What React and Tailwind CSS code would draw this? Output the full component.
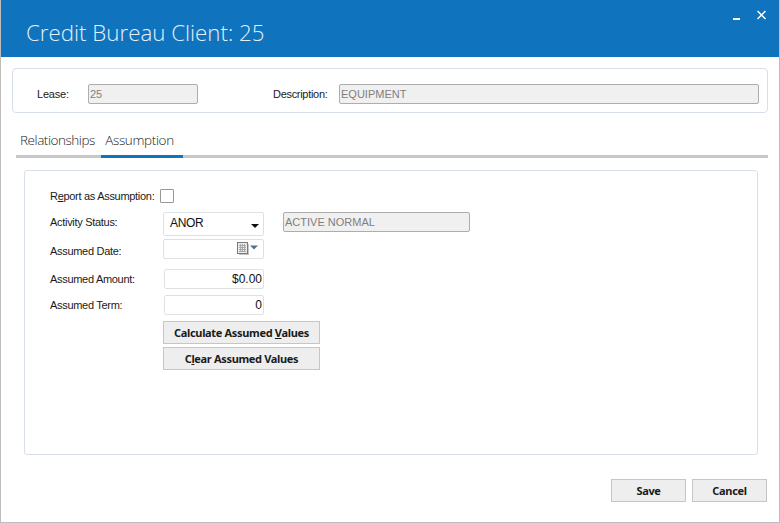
import React from 'react';

const readOnlyField = 'h-5 rounded-[2px] border border-[#adadad] bg-[#f0f0f0] px-[1px] text-[11px] leading-[18px] text-[#7f7f7f]';
const softField = 'rounded-[2px] border border-[#dde1e6] bg-white';
const button = 'flex items-center justify-center border border-[#c6c6c6] bg-[#eeeeee] pt-[1px] text-[11px] font-bold tracking-[-0.33px] text-[#1b1b1b] [font-family:"Noto_Sans",sans-serif]';

function CalendarIcon() {
  return (
    <svg width="24" height="14" viewBox="0 0 24 14" className="mr-[2px] shrink-0">
      <rect x="0.500" y="0.500" width="10" height="11" fill="#ececec" stroke="#7a7a7a" />
      <rect x="11" y="2" width="1" height="11" fill="#c4c4c4" />
      <rect x="2" y="12" width="10" height="1" fill="#c4c4c4" />
      <path d="M2 3.500h7M2 5.500h7M2 7.500h7M2 9.500h7M3.500 2v8M5.500 2v8M7.500 2v8" stroke="#a9a9a9" strokeWidth="1" fill="none" />
      <path d="M13 3.500h8l-4 4z" fill="#55708f" />
    </svg>
  );
}

function FormRow({ label, labelClass, className, children }) {
  return (
    <div className={`flex items-start ${className}`}>
      <span className={`w-[113px] shrink-0 text-[11px] tracking-[-0.3px] text-[#1a1a1a] ${labelClass}`}>{label}</span>
      {children}
    </div>
  );
}

export default function App() {
  return (
    <div className='flex h-[523px] w-[780px] flex-col overflow-hidden border-x border-b border-[#bdbdbd] bg-white [font-family:"Liberation_Sans",Arial,sans-serif]'>
      <header className="-mx-px flex h-[57px] shrink-0 items-start justify-between bg-[#0f74bd] text-white">
        <h1 className='pl-[26px] pt-[16px] text-[22.300px] leading-[33px] font-light text-[#e4f0f9] [font-family:"Open_Sans",sans-serif]'>
          Credit Bureau Client: 25
        </h1>
        <div className="mr-[14px] mt-[10px] flex items-start gap-[17px]">
          <svg width="7" height="10" viewBox="0 0 7 10" aria-label="Minimize">
            <rect x="0" y="8" width="7" height="2" fill="#ffffff" />
          </svg>
          <svg width="9" height="10" viewBox="0 0 9 10" aria-label="Close">
            <path d="M0.500 1l8 8M8.500 1l-8 8" stroke="#ffffff" strokeWidth="1.500" fill="none" />
          </svg>
        </div>
      </header>

      <div className="ml-[11px] mr-[11px] mt-[11px] flex h-[45px] shrink-0 items-center rounded-[4px] border border-[#d8dfe8] bg-white pt-[7px]">
        <span className="ml-[24px] w-[51px] text-[11px] tracking-[-0.2px] text-[#1a1a1a]">Lease:</span>
        <div className={`w-[110px] ${readOnlyField}`}>25</div>
        <span className="ml-[75px] w-[66px] text-[11px] tracking-[-0.3px] text-[#1a1a1a]">Description:</span>
        <div className={`w-[420px] ${readOnlyField}`}>EQUIPMENT</div>
      </div>

      <nav className="ml-[15px] mr-[11px] mt-[16px] flex h-[29px] shrink-0 items-start border-b-[3px] border-[#c8c8c8] text-[13.500px] leading-[23px] font-light text-[#222222] [font-family:'Open_Sans',sans-serif]">
        <span className="w-[85px] pl-[4px] tracking-[-0.45px]">Relationships</span>
        <span className="-mb-[3px] flex h-[29px] w-[82px] justify-center border-b-[3px] border-[#0f74bd] pr-[5px] tracking-[-0.35px]">Assumption</span>
      </nav>

      <section className="ml-[23px] mr-[21px] mt-[12px] h-[285px] shrink-0 rounded-[3px] border border-[#d8dfe8] bg-white pl-[25px]">
        <div className="mt-[17px] flex h-[16px] items-center">
          <span className="w-[110px] shrink-0 whitespace-nowrap text-[11px] tracking-[-0.3px] text-[#1a1a1a]">
            R<span className="underline">e</span>port as Assumption:
          </span>
          <span className="size-[14px] rounded-[1px] border border-[#979797] bg-white" />
        </div>

        <FormRow label="Activity Status:" labelClass="pt-[2px] leading-[16px]" className="mt-[8px]">
          <div className={`flex h-[24px] w-[101px] items-start justify-between pl-[6px] pr-[3px] pt-[1px] text-[12px] tracking-[-0.3px] text-[#111111] ${softField} border-[#cfd3d8]`}>
            <span>ANOR</span>
            <svg width="8" height="4" viewBox="0 0 8 4" className="mr-[1px] mt-[10px]">
              <path d="M0 0h8l-4 4z" fill="#111111" />
            </svg>
          </div>
          <div className={`ml-[19px] w-[187px] ${readOnlyField}`}>ACTIVE NORMAL</div>
        </FormRow>

        <FormRow label="Assumed Date:" labelClass="pt-[5px] leading-[15px]" className="mt-[3px]">
          <div className={`flex h-[20px] w-[101px] items-center justify-end ${softField}`}>
            <CalendarIcon />
          </div>
        </FormRow>

        <FormRow label="Assumed Amount:" labelClass="pt-[2px] leading-[16px]" className="mt-[10px]">
          <div className={`ml-[1px] h-[20px] w-[100px] pr-[1px] text-right text-[12px] leading-[18px] text-[#111111] ${softField}`}>$0.00</div>
        </FormRow>

        <FormRow label="Assumed Term:" labelClass="pt-[2px] leading-[16px]" className="mt-[6px]">
          <div className={`ml-[1px] h-[20px] w-[100px] pr-[1px] text-right text-[12px] leading-[18px] text-[#111111] ${softField}`}>0</div>
        </FormRow>

        <div className="ml-[113px] mt-[6px] flex w-[157px] flex-col gap-[3px]">
          <button type="button" className={`h-[23px] ${button}`}>
            <span>Calculate Assumed <span className="underline">V</span>alues</span>
          </button>
          <button type="button" className={`h-[23px] ${button}`}>
            <span>C<span className="underline">l</span>ear Assumed Values</span>
          </button>
        </div>
      </section>

      <footer className="mr-[12px] mt-[24px] flex justify-end gap-[6px]">
        <button type="button" className={`h-[23px] w-[75px] ${button}`}>Save</button>
        <button type="button" className={`h-[23px] w-[75px] ${button}`}>Cancel</button>
      </footer>
    </div>
  );
}
